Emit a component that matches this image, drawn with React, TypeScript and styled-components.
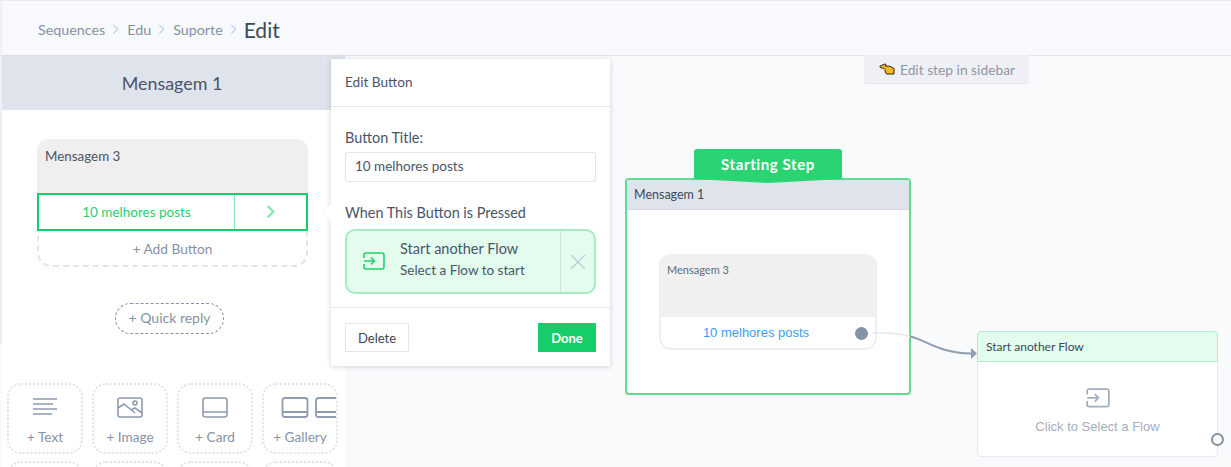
import React from "react";
import styled, { createGlobalStyle } from "styled-components";

const GlobalStyle = createGlobalStyle`
  html, body {
    margin: 0;
    padding: 0;
    height: 100%;
    overflow: hidden;
  }
  body {
    font-family: Lato, "Open Sans", sans-serif;
    background: #f9fafc;
  }
  * { box-sizing: border-box; }
`;

const Chevron = ({ color = "#a9cdf0", size = 7, weight = 1.2 }: { color?: string; size?: number; weight?: number }) => (
  <svg width={size} height={size * 1.5} viewBox="0 0 8 12" fill="none">
    <path d="M1.500 1l5 5-5 5" stroke={color} strokeWidth={weight} />
  </svg>
);

const FlowIcon = ({ color, size }: { color: string; size: number }) => (
  <svg width={size} height={size * 0.82} viewBox="0 0 22 18" fill="none" stroke={color} strokeWidth="1.6">
    <path d="M1 6V3a2 2 0 0 1 2-2h16a2 2 0 0 1 2 2v12a2 2 0 0 1-2 2H3a2 2 0 0 1-2-2v-3" />
    <path d="M1 9h10M8 5.500 11.500 9 8 12.500" />
  </svg>
);

const tileIcons: Record<string, React.ReactNode> = {
  Text: (
    <svg width="26" height="19" viewBox="0 0 26 19" stroke="#8e9bb0" strokeWidth="1.6">
      <path d="M1 2h24M1 7h20M1 12h24M1 17h19" />
    </svg>
  ),
  Image: (
    <svg width="26" height="21" viewBox="0 0 26 21" fill="none" stroke="#8e9bb0" strokeWidth="1.6">
      <rect x="1" y="1" width="24" height="19" rx="2" />
      <path d="M1 11l6-4 11 9M14 13l4-2 7 5" />
      <circle cx="18" cy="6" r="2" />
    </svg>
  ),
  Card: (
    <svg width="26" height="21" viewBox="0 0 26 21" fill="none" stroke="#8e9bb0" strokeWidth="1.6">
      <rect x="1" y="1" width="24" height="19" rx="2.500" />
      <path d="M1 15h24" />
    </svg>
  ),
  Gallery: (
    <svg width="72" height="21" viewBox="0 0 72 21" fill="none" stroke="#8e9bb0" strokeWidth="1.8">
      <rect x="18.500" y="1" width="25" height="19" rx="2.500" />
      <path d="M18.500 15h25" />
      <rect x="52" y="1" width="30" height="19" rx="2.500" />
      <path d="M52 15h30" />
    </svg>
  ),
};

const HandIcon = () => (
  <svg width="16" height="12" viewBox="0 0 16 12">
    <path
      d="M0.800 3.200 6 0.900 7.300 1.800 6 3 11 3.300 15 5.500V11H7.500L6.300 9 6 6.700 5 5.500 1.500 4.700z"
      fill="#f7b71d"
      stroke="#2f2a1c"
      strokeWidth="1"
      strokeLinejoin="round"
    />
  </svg>
);

const App = () => {
  return (
    <>
      <GlobalStyle />
      <Page>
        <Header>
          <Crumb>Sequences</Crumb>
          <Chevron />
          <Crumb>Edu</Crumb>
          <Chevron />
          <Crumb>Suporte</Crumb>
          <Chevron />
          <Current>Edit</Current>
        </Header>

        <Main>
          <Sidebar>
            <SidebarTitle>Mensagem 1</SidebarTitle>
            <SidebarBody>
              <MessageCard>
                <MessageHead>Mensagem 3</MessageHead>
                <ActiveButton>
                  <ActiveLabel>10 melhores posts</ActiveLabel>
                  <ActiveArrow>
                    <Chevron color="#86e8ae" size={9} weight={2} />
                  </ActiveArrow>
                </ActiveButton>
                <AddButton>+ Add Button</AddButton>
              </MessageCard>
              <QuickReply>+ Quick reply</QuickReply>
              <Tiles>
                {Object.keys(tileIcons).map(name => (
                  <Tile key={name}>
                    <TileIcon>{tileIcons[name]}</TileIcon>
                    <span>+ {name}</span>
                  </Tile>
                ))}
                <Tile />
                <Tile />
                <Tile />
                <Tile />
              </Tiles>
            </SidebarBody>
          </Sidebar>

          <Canvas>
            <EditHint>
              <HandIcon />
              Edit step in sidebar
            </EditHint>

            <StartTab>Starting Step</StartTab>
            <StartNode>
              <NodeTitle>Mensagem 1</NodeTitle>
              <NodeCard>
                <NodeCardHead>Mensagem 3</NodeCardHead>
                <NodeCardButton>10 melhores posts</NodeCardButton>
                <Port />
              </NodeCard>
            </StartNode>

            <Wire width="112" height="30" viewBox="0 0 112 30" fill="none">
              <path d="M6 2C24 1 34 3 43 5.500" stroke="#e3e7ef" strokeWidth="1.500" />
              <path d="M43 5.500C60 9 70 22 105 22.500" stroke="#8e9bb0" strokeWidth="2" />
              <path d="M104 17l6 5.500-6 5.500z" fill="#8e9bb0" />
            </Wire>

            <FlowNode>
              <FlowTitle>Start another Flow</FlowTitle>
              <FlowBody>
                <FlowIcon color="#a3aec0" size={24} />
                <FlowHint>Click to Select a Flow</FlowHint>
              </FlowBody>
              <RingPort />
            </FlowNode>
          </Canvas>

          <Popover>
            <Caret />
            <PopoverHeader>Edit Button</PopoverHeader>
            <PopoverBody>
              <FieldLabel>Button Title:</FieldLabel>
              <TitleInput readOnly value="10 melhores posts" />
              <ActionLabel>When This Button is Pressed</ActionLabel>
              <ActionBox>
                <ActionIcon>
                  <FlowIcon color="#1fd16f" size={22} />
                </ActionIcon>
                <ActionText>
                  <ActionTitle>Start another Flow</ActionTitle>
                  <ActionSub>Select a Flow to start</ActionSub>
                </ActionText>
                <ActionClose>
                  <svg width="16" height="16" viewBox="0 0 16 16" stroke="#c3cbdb" strokeWidth="1.500">
                    <path d="M1 1l14 14M15 1 1 15" />
                  </svg>
                </ActionClose>
              </ActionBox>
            </PopoverBody>
            <PopoverFooter>
              <DeleteButton>Delete</DeleteButton>
              <DoneButton>Done</DoneButton>
            </PopoverFooter>
          </Popover>
        </Main>
      </Page>
    </>
  );
};

const Page = styled.div`
  width: 1231px;
  height: 467px;
  display: flex;
  flex-direction: column;
  overflow: hidden;
  background: #f9fafc;
`;

const Header = styled.header`
  height: 56px;
  flex: none;
  display: flex;
  align-items: center;
  padding: 2px 0 0 36px;
  background: #f8f9fc;
  border-top: 1px solid #e6e9ef;
  border-bottom: 1px solid #e1e5ec;
  border-left: 2px solid #eef0f5;
`;

const Crumb = styled.span`
  font-size: 14.300px;
  color: #8492a6;
  margin-right: 7px;

  &:not(:first-child) {
    margin-left: 8px;
  }
`;

const Current = styled.span`
  font-size: 21px;
  color: #3c4858;
  margin-left: 7px;
`;

const Main = styled.div`
  position: relative;
  flex: 1;
  display: flex;
  min-height: 0;
`;

const Sidebar = styled.aside`
  width: 345px;
  flex: none;
  display: flex;
  flex-direction: column;
  background: #fff;
  border-left: 2px solid;
  border-image: linear-gradient(#eef0f5 289px, #f9fafc 289px) 1;
  box-shadow: 1px 0 3px rgba(60, 72, 88, 0.08);
  overflow: hidden;
`;

const SidebarTitle = styled.div`
  height: 54px;
  flex: none;
  display: flex;
  align-items: center;
  justify-content: center;
  background: #dfe4ec;
  color: #4a5568;
  font-size: 17.900px;
  padding-right: 3px;
`;

const SidebarBody = styled.div`
  display: flex;
  flex-direction: column;
  align-items: flex-start;
  padding: 29px 0 0 5px;
`;

const MessageCard = styled.div`
  width: 271px;
  margin-left: 30px;
  display: flex;
  flex-direction: column;
`;

const MessageHead = styled.div`
  height: 54px;
  padding: 9px 8px;
  background: #efefef;
  border-radius: 12px 12px 0 0;
  color: #4a5568;
  font-size: 13.400px;
`;

const ActiveButton = styled.div`
  height: 38px;
  display: flex;
  border: 2px solid #16ce69;
  background: #fff;
`;

const ActiveLabel = styled.div`
  flex: 1;
  display: flex;
  align-items: center;
  justify-content: center;
  color: #1fd16f;
  font-size: 13.500px;
`;

const ActiveArrow = styled.div`
  width: 72px;
  display: flex;
  align-items: center;
  justify-content: center;
  border-left: 1px solid #86e8ae;
`;

const AddButton = styled.div`
  height: 36px;
  display: flex;
  align-items: center;
  justify-content: center;
  border: 2px dashed #e1e5ec;
  border-top: none;
  border-radius: 0 0 14px 14px;
  color: #8492a6;
  font-size: 13.700px;
`;

const QuickReply = styled.div`
  width: 109px;
  height: 31px;
  margin: 36px 0 0 108px;
  display: flex;
  align-items: center;
  justify-content: center;
  padding-bottom: 3px;
  border: 1px dashed #8492a6;
  border-radius: 16px;
  color: #8492a6;
  font-size: 14px;
`;

const Tiles = styled.div`
  display: grid;
  grid-template-columns: repeat(4, 76px);
  grid-auto-rows: 71px;
  column-gap: 9px;
  row-gap: 7px;
  margin-top: 49px;
`;

const Tile = styled.div`
  display: flex;
  flex-direction: column;
  align-items: center;
  overflow: hidden;
  border: 2px dotted #dfe4ec;
  border-radius: 14px;
  color: #8492a6;
  font-size: 13.600px;
  padding-top: 12px;
`;

const TileIcon = styled.div`
  width: 100%;
  height: 28px;
  display: flex;
  justify-content: center;
  align-items: flex-start;
  margin-bottom: 4px;
`;

const Canvas = styled.div`
  position: relative;
  flex: 1;
  background: #f9fafc;
`;

const EditHint = styled.div`
  position: absolute;
  left: 519px;
  top: -1px;
  width: 165px;
  height: 29px;
  display: flex;
  align-items: center;
  justify-content: center;
  gap: 5px;
  padding-left: 1px;
  background: #eef0f5;
  border-bottom: 1px solid #e4e7ee;
  border-radius: 0 0 3px 3px;
  color: #8e96a3;
  font-size: 13.800px;
`;

const StartTab = styled.div`
  position: absolute;
  z-index: 2;
  left: 349px;
  top: 93px;
  width: 148px;
  height: 34px;
  display: flex;
  align-items: center;
  justify-content: center;
  padding-bottom: 5px;
  background: #2bd473;
  color: #fff;
  font-size: 15px;
  font-weight: 700;
  letter-spacing: 0.6px;
  border-radius: 3px 3px 0 0;
  clip-path: polygon(0 0, 100% 0, 100% 30px, 50% 100%, 0 30px);
`;

const StartNode = styled.div`
  position: absolute;
  left: 280px;
  top: 122px;
  width: 286px;
  height: 217px;
  background: #fff;
  border: 2px solid #5ddc92;
  border-radius: 4px;
`;

const NodeTitle = styled.div`
  height: 30px;
  display: flex;
  align-items: center;
  padding-left: 7px;
  background: #dfe4ec;
  border-bottom: 1px solid #d5dbe5;
  color: #3c4858;
  font-size: 12.500px;
`;

const NodeCard = styled.div`
  position: absolute;
  left: 32px;
  top: 74px;
  width: 218px;
  height: 96px;
  background: #fff;
  border: 2px solid #eceff4;
  border-radius: 12px;
`;

const NodeCardHead = styled.div`
  height: 63px;
  margin: -2px -2px 0;
  padding: 9px 8px;
  background: #f0f0f0;
  border-bottom: 2px solid #eceff4;
  border-radius: 12px 12px 0 0;
  color: #5f6b7c;
  font-size: 11px;
`;

const NodeCardButton = styled.div`
  height: 31px;
  display: flex;
  align-items: center;
  justify-content: center;
  padding-right: 24px;
  color: #3d9bfb;
  font-family: "Liberation Sans", Arial, sans-serif;
  font-size: 13px;
`;

const Port = styled.span`
  position: absolute;
  right: 7px;
  top: 71px;
  width: 13px;
  height: 13px;
  border-radius: 50%;
  background: #8492a6;
`;

const Wire = styled.svg`
  position: absolute;
  z-index: 1;
  left: 522px;
  top: 275px;
`;

const FlowNode = styled.div`
  position: absolute;
  left: 632px;
  top: 275px;
  width: 241px;
  height: 126px;
  background: #fff;
  border: 1px solid #e6e9f0;
  border-radius: 4px;
`;

const FlowTitle = styled.div`
  height: 31px;
  margin: -1px -1px 0;
  display: flex;
  align-items: center;
  padding-left: 8px;
  background: #e3fcee;
  border: 1px solid #aeeecb;
  border-radius: 4px 4px 0 0;
  color: #3c4858;
  font-size: 12px;
`;

const FlowBody = styled.div`
  display: flex;
  flex-direction: column;
  align-items: center;
  padding-top: 26px;
`;

const FlowHint = styled.div`
  margin-top: 11px;
  color: #a3aec0;
  font-family: "Liberation Sans", Arial, sans-serif;
  font-size: 13px;
`;

const RingPort = styled.span`
  position: absolute;
  right: -7px;
  top: 101px;
  width: 13px;
  height: 13px;
  border-radius: 50%;
  background: #fff;
  border: 2px solid #8492a6;
`;

const Popover = styled.div`
  position: absolute;
  z-index: 5;
  left: 331px;
  top: 3px;
  width: 279px;
  height: 307px;
  display: flex;
  flex-direction: column;
  background: #fff;
  box-shadow: 0 1px 5px rgba(60, 72, 88, 0.22);
`;

const Caret = styled.span`
  position: absolute;
  left: -6px;
  top: 147px;
  width: 13px;
  height: 13px;
  background: #fff;
  box-shadow: -1px 1px 1px rgba(60, 72, 88, 0.05);
  transform: rotate(45deg);
`;

const PopoverHeader = styled.div`
  position: relative;
  height: 48px;
  flex: none;
  display: flex;
  align-items: center;
  padding: 0 0 2px 14px;
  border-bottom: 1px solid #e1e5ec;
  color: #4a5568;
  font-size: 13.600px;
`;

const PopoverBody = styled.div`
  position: relative;
  height: 201px;
  flex: none;
  display: flex;
  flex-direction: column;
  padding: 20px 14px 0;
  border-bottom: 1px solid #e1e5ec;
  background: #fff;
`;

const FieldLabel = styled.div`
  height: 20px;
  display: flex;
  align-items: center;
  color: #4a5568;
  font-size: 14.400px;
`;

const TitleInput = styled.input`
  width: 251px;
  height: 30px;
  margin-top: 5px;
  padding: 0 9px 3px;
  border: 1px solid #e1e5ec;
  border-radius: 2px;
  background: #fff;
  color: #4a5568;
  font-family: inherit;
  font-size: 13.500px;
  outline: none;
`;

const ActionLabel = styled(FieldLabel)`
  margin-top: 20px;
`;

const ActionBox = styled.div`
  width: 251px;
  height: 65px;
  margin-top: 7px;
  display: flex;
  background: #e3fcee;
  border: 2px solid #a5ecc4;
  border-radius: 10px;
`;

const ActionIcon = styled.div`
  width: 53px;
  display: flex;
  align-items: center;
  justify-content: center;
`;

const ActionText = styled.div`
  flex: 1;
  display: flex;
  flex-direction: column;
  justify-content: center;
  gap: 3px;
  padding-bottom: 4px;
  color: #4a5568;
  line-height: 18px;
`;

const ActionTitle = styled.span`
  font-size: 14.500px;
`;

const ActionSub = styled.span`
  font-size: 13.500px;
`;

const ActionClose = styled.div`
  width: 34px;
  display: flex;
  align-items: center;
  justify-content: center;
  border-left: 1px solid #c5e6d4;
`;

const PopoverFooter = styled.div`
  flex: 1;
  display: flex;
  align-items: flex-start;
  justify-content: space-between;
  padding: 15px 14px 0;
`;

const DeleteButton = styled.button`
  width: 64px;
  height: 29px;
  padding: 0;
  background: #fff;
  border: 1px solid #e1e5ec;
  border-radius: 1px;
  color: #3c4858;
  font-family: inherit;
  font-size: 13px;
`;

const DoneButton = styled.button`
  width: 58px;
  height: 29px;
  padding: 0;
  background: #16ce69;
  border: none;
  border-radius: 1px;
  color: #fff;
  font-family: inherit;
  font-size: 13px;
  font-weight: 700;
`;

export default App;
